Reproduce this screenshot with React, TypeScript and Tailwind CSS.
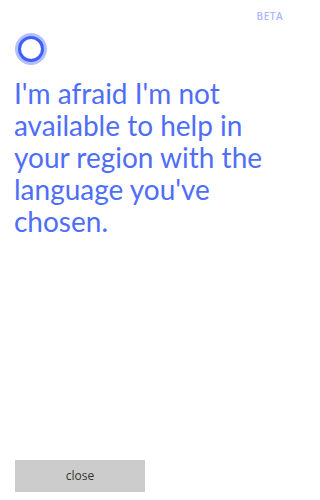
export default function App() {
  return (
    <div className="w-[300px] h-[500px] bg-white flex flex-col relative" style={{ fontFamily: '"Open Sans", "Noto Sans", sans-serif' }}>
      <div className="flex justify-end pt-[11px] pr-[17px] h-[30px]">
        <span className="text-[10px] font-semibold text-[#aab8ff] leading-none tracking-[0.5px]">BETA</span>
      </div>
      <div className="pl-[15px] pt-[3px]">
        <div className="w-[32px] h-[32px] rounded-full bg-[#b3c0ff] flex items-center justify-center">
          <div className="w-[26px] h-[26px] rounded-full bg-[#3f5ffc] flex items-center justify-center">
            <div className="w-[20px] h-[20px] rounded-full bg-white" />
          </div>
        </div>
      </div>
      <p className="pl-[14px] pr-[10px] mt-[12px] text-[28px] leading-[32px] font-normal text-[#4f6ef7]" style={{ fontFamily: 'Lato, "Open Sans", sans-serif' }}>
        I'm afraid I'm not available to help in your region with the language you've chosen.
      </p>
      <div className="flex-1" />
      <div className="pl-[15px] pb-[8px]">
        <button className="w-[130px] h-[32px] bg-[#cccccc] text-[12px] text-[#333333]">close</button>
      </div>
    </div>
  );
}
